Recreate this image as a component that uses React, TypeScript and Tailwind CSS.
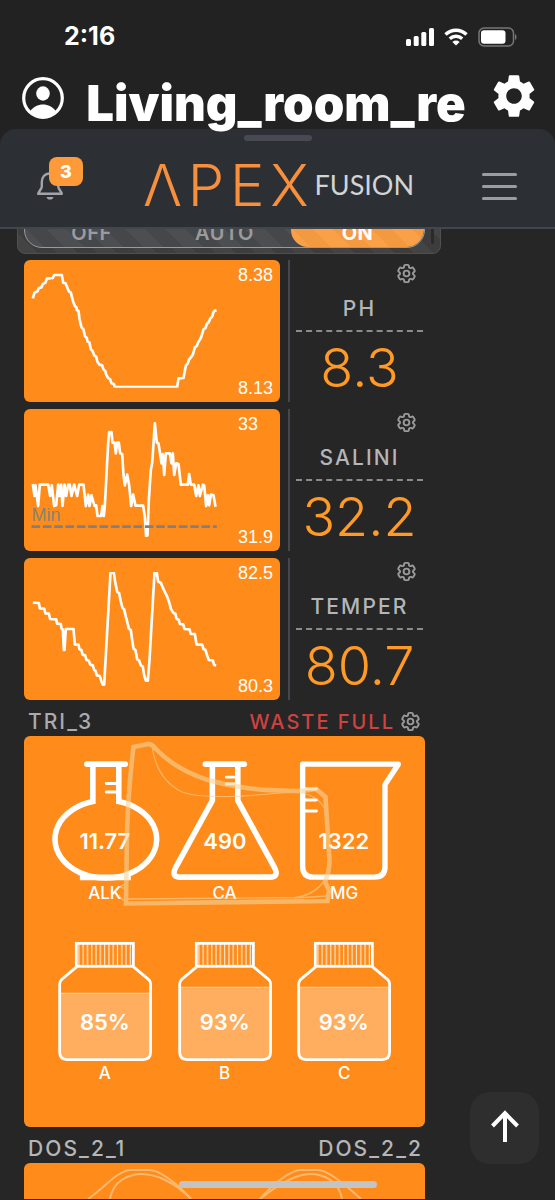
import { HiOutlineCog6Tooth } from "react-icons/hi2";
import { MdSettings } from "react-icons/md";

const probes = [
  {
    name: "PH",
    value: "8.3",
    high: "8.38",
    low: "8.13",
    viewBox: "27 28 639 426",
    points:
      "52,143 57,126 66,122 70,112 78,110 82,100 90,96 94,84 112,82 116,73 139,73 143,96 150,98 155,110 160,122 166,126 172,150 178,166 183,170 184,178 189,180 192,205 198,230 204,236 208,256 214,262 216,272 222,276 226,296 231,300 236,314 242,318 246,334 252,342 260,344 264,356 270,362 272,372 278,382 284,386 288,398 295,400 298,409 485,409 489,383 504,382 511,345 517,338 520,328 526,320 532,312 538,290 544,286 548,275 556,262 560,250 564,236 570,232 574,220 580,214 584,204 590,198 594,184 598,180 603,179",
  },
  {
    name: "SALINI",
    value: "32.2",
    high: "33",
    low: "31.9",
    min: 380,
    viewBox: "27 27 639 426",
    points:
      "52,252 57,288 60,256 68,318 73,254 98,254 104,288 109,256 116,318 122,316 128,254 132,288 137,254 141,318 147,254 152,288 158,254 163,254 168,288 176,254 185,288 191,254 204,254 211,318 218,284 222,318 228,286 237,318 242,316 246,348 257,348 261,318 265,348 268,318 278,130 281,96 288,96 291,128 297,128 301,160 305,128 310,128 314,160 320,162 324,225 328,256 335,224 341,256 347,318 353,284 360,317 383,317 388,350 392,410 396,406 400,300 406,210 410,190 418,70 424,128 429,130 434,162 438,190 442,162 446,225 451,160 463,160 468,190 472,160 476,225 482,190 489,192 496,254 517,254 521,222 526,254 536,254 542,288 549,256 553,288 562,254 566,256 572,318 577,286 581,316 586,284 594,286 600,320",
  },
  {
    name: "TEMPER",
    value: "80.7",
    high: "82.5",
    low: "80.3",
    viewBox: "27 24 639 426",
    points:
      "52,158 70,159 73,175 86,176 90,190 100,191 104,207 122,208 125,221 136,222 138,236 142,238 145,300 147,300 151,237 174,237 178,283 189,284 192,298 198,300 201,314 209,316 213,330 220,332 224,344 232,346 236,360 240,362 244,376 253,378 257,392 262,404 266,404 285,68 295,68 299,95 305,125 311,130 316,155 321,174 326,178 331,200 335,215 340,236 346,240 350,270 354,296 360,300 365,328 371,332 376,346 382,350 386,376 391,392 397,392 402,330 417,68 424,68 428,95 436,98 442,113 449,128 456,142 462,160 466,176 473,188 480,192 483,206 490,210 493,222 503,223 507,237 522,238 526,252 538,252 543,283 560,284 564,297 570,300 574,314 580,330 592,331 596,345 602,346",
  },
];

const bottles = [
  { label: "A", percent: 85 },
  { label: "B", percent: 93 },
  { label: "C", percent: 93 },
];

function StatusBar() {
  return (
    <div className="flex h-[74px] items-center justify-between pl-16 pr-[38px]">
      <span className="text-[25px] font-bold text-white">2:16</span>
      <div className="flex items-center gap-2.5">
        <svg className="h-[18px] w-7" viewBox="0 0 28 18" fill="#fff">
          <rect x="0" y="11" width="5" height="7" rx="1.5" />
          <rect x="7.7" y="8" width="5" height="10" rx="1.5" />
          <rect x="15.3" y="4" width="5" height="14" rx="1.5" />
          <rect x="23" y="0" width="5" height="18" rx="1.5" />
        </svg>
        <svg className="h-[18px] w-6" viewBox="0 0 24 18" fill="none" stroke="#fff" strokeWidth="3.4">
          <path d="M1.5 6.5a15 15 0 0 1 21 0" />
          <path d="M5.8 10.8a9 9 0 0 1 12.4 0" />
          <path d="M12 17.6 8.4 14a5.2 5.2 0 0 1 7.2 0Z" fill="#fff" stroke="none" />
        </svg>
        <svg className="h-5 w-[39px]" viewBox="0 0 39 20">
          <rect x="1" y="1" width="34.5" height="18" rx="5" fill="none" stroke="#777" strokeWidth="1.5" />
          <rect x="3" y="3.2" width="24.5" height="13.6" rx="3" fill="#fff" />
          <path d="M37 7v6c2-.8 2-5.2 0-6Z" fill="#777" />
        </svg>
      </div>
    </div>
  );
}

function TitleBar() {
  return (
    <div className="relative z-10 flex h-[55px] items-center justify-between pl-[22px] pr-[15px]">
      <button type="button" aria-label="Account" className="mb-2">
        <svg className="size-[42px]" viewBox="0 0 42 42" fill="#fff">
          <circle cx="21" cy="21" r="19.3" fill="none" stroke="#fff" strokeWidth="3.2" />
          <ellipse cx="21" cy="16.5" rx="6.8" ry="7.2" />
          <path d="M8 34.5C11 30 16 27.6 21 27.6S31 30 34 34.5A19.5 19.5 0 0 1 8 34.5Z" />
        </svg>
      </button>
      <h1 className="mt-1 whitespace-nowrap text-[49px] leading-[55px] font-black text-white">
        Living_room_re
      </h1>
      <button type="button" aria-label="Settings" className="mb-3 text-white">
        <MdSettings className="size-[52px]" />
      </button>
    </div>
  );
}

function AppHeader() {
  return (
    <header className="h-[100px] rounded-t-2xl border-b-2 border-[#42474d] bg-[#2c3034] pt-1.5">
      <div className="mx-auto h-1.5 w-[68px] rounded-full bg-[#474a53]" />
      <div className="flex items-center justify-between pt-4 pr-[38px] pl-9">
        <button type="button" aria-label="Notifications" className="relative h-14 w-[47px]">
          <svg className="mt-0.5 h-7 w-7" viewBox="0 0 28 28" fill="none" stroke="#a3a4a7" strokeWidth="2.4" strokeLinejoin="round">
            <path d="M14 1.5C8.5 1.5 5.8 5.5 5.8 10v4.5C5.8 17 2.5 19.5 2.2 21.8H25.8C25.5 19.5 22.2 17 22.2 14.5V10C22.2 5.5 19.5 1.5 14 1.5Z" />
            <path d="M10.5 25h7c-.5 3.4-6.5 3.4-7 0Z" fill="#a3a4a7" stroke="none" />
          </svg>
          <span className="absolute top-0 right-0 flex h-[29px] w-[34px] items-center justify-center rounded-lg bg-[#ff9a38] text-lg font-extrabold text-white">
            3
          </span>
        </button>
        <a href="#home" className="mr-2 flex items-center">
          <span className="text-[58px] leading-[56px] font-light tracking-widest text-[#f78f3c]">
            ΛPEX
          </span>
          <span className="font-['Lato'] text-[27px] leading-8 text-[#d3d4d6]">
            FUSION
          </span>
        </a>
        <button type="button" aria-label="Menu" className="mt-0.5 flex w-[35px] flex-col gap-[9px]">
          <span className="h-[3px] rounded-full bg-[#9b9ea1]" />
          <span className="h-[3px] rounded-full bg-[#9b9ea1]" />
          <span className="h-[3px] rounded-full bg-[#9b9ea1]" />
        </button>
      </div>
    </header>
  );
}

function OutletSwitch() {
  return (
    <div className="mr-[114px] ml-[17px] flex h-[25px] items-end overflow-hidden">
      <div className="flex h-14 w-full items-end rounded-lg border border-[#505050] bg-[repeating-linear-gradient(45deg,#444_0_14px,#3d3d3d_14px_28px)] px-1.5 pb-[5px]">
        <div className="grid h-9 flex-1 grid-cols-3 overflow-hidden rounded-[18px] border border-[#9a9a9a] bg-[repeating-linear-gradient(45deg,#4c4e52_0_14px,#45474b_14px_28px)] text-xl font-semibold tracking-wide text-[#9b9b9d]">
          <button type="button" className="pt-1.5">OFF</button>
          <button type="button" className="pt-1.5">AUTO</button>
          <button
            type="button"
            className="rounded-[18px] bg-[repeating-linear-gradient(45deg,#faa148_0_14px,#f3993f_14px_28px)] pt-1.5 font-bold text-white"
          >
            ON
          </button>
        </div>
        <div className="mb-1 ml-1.5 h-6 w-[3px] rounded-full bg-[#2a2a2a]" />
      </div>
    </div>
  );
}

function ProbeRow({ probe }: { probe: (typeof probes)[number] }) {
  const clip = `plot-${probe.name}`;
  return (
    <div className="flex h-[142px] gap-2">
      <div className="flex flex-1 overflow-hidden rounded-md bg-[#ff8c1a]">
        <svg className="h-full min-w-0 flex-1" viewBox={probe.viewBox}>
          <clipPath id={clip}>
            <rect x="40" y="66" width="580" height="345" />
          </clipPath>
          <polyline
            points={probe.points}
            fill="none"
            stroke="#fff"
            strokeWidth="8"
            strokeLinejoin="round"
            clipPath={`url(#${clip})`}
          />
          {probe.min && (
            <>
              <path d={`M48 ${probe.min}H604`} stroke="#808080" strokeWidth="8" strokeDasharray="26 8" />
              <text x="48" y={probe.min - 18} fontSize="54" fill="#8c8075" fontFamily="Liberation Sans, sans-serif">
                Min
              </text>
            </>
          )}
        </svg>
        <div className="flex w-[42px] flex-col justify-between pt-[5px] pb-1 font-['Liberation_Sans'] text-lg leading-5 text-white">
          <span>{probe.high}</span>
          <span>{probe.low}</span>
        </div>
      </div>
      <div className="flex w-[137px] flex-col border-l-2 border-[#44474b] pr-0.5 pl-1.5">
        <button type="button" aria-label={`Configure ${probe.name}`} className="mt-0.5 mr-[5px] self-end text-[#9a9a9a]">
          <HiOutlineCog6Tooth className="size-[23px]" strokeWidth={2} />
        </button>
        <h2 className="mt-2.5 pb-[7px] text-center text-[21px] leading-7 font-medium tracking-widest text-[#b4b6b9]">
          {probe.name}
        </h2>
        <div className="border-t-2 border-dashed border-[#8c8c8c]" />
        <p className="mt-2 text-center text-[54px] leading-[56px] font-light text-[#ff9a26]">
          {probe.value}
        </p>
      </div>
    </div>
  );
}

function Value({ children }: { children: string }) {
  return (
    <text x="60" y="89" textAnchor="middle" fontSize="22" fontWeight="600" fill="#fff">
      {children}
    </text>
  );
}

function Caption({ children }: { children: string }) {
  return <span className="text-[17px] leading-5 font-medium text-white">{children}</span>;
}

function Trident() {
  return (
    <section className="relative rounded-md bg-[#ff8c1a] px-[21px] pt-6 pb-11">
      <div className="grid grid-cols-3 gap-y-[38px]">
        <div className="flex flex-col items-center">
          <svg className="h-[123px] w-full" viewBox="0 0 120 123" fill="none" stroke="#fff" strokeWidth="5.6">
            <path d="M42 4H80.5" strokeLinecap="round" />
            <path d="M48 4V41.5A51 39 0 1 0 74 41.5V4" />
            <path d="M35 117.5H86" />
            <path d="M61.5 23.5H73M61.5 32H73" strokeWidth="3" strokeLinecap="round" />
            <g stroke="none"><Value>11.77</Value></g>
          </svg>
          <Caption>ALK</Caption>
        </div>
        <div className="flex flex-col items-center">
          <svg className="h-[123px] w-full" viewBox="0 0 120 123" fill="none" stroke="#fff" strokeWidth="5.6">
            <path d="M40.5 4H79.5" strokeLinecap="round" />
            <path d="M47.5 4V40.5L10.5 108Q6 117.3 15.5 117.3H105Q114.5 117.3 110 108L73 40.5V4" />
            <path d="M61.5 17H72M61.5 24H72" strokeWidth="3" strokeLinecap="round" />
            <g stroke="none"><Value>490</Value></g>
          </svg>
          <Caption>CA</Caption>
        </div>
        <div className="flex flex-col items-center">
          <svg className="h-[123px] w-full" viewBox="0 0 120 123" fill="none" stroke="#fff" strokeWidth="5.4" strokeLinejoin="round">
            <path d="M18.7 4H114.7L101.3 24.5V107Q101.3 117.3 91 117.3H29Q18.7 117.3 18.7 107Z" />
            <path d="M20 29H32.5M20 40H32.5M20 51H32.5" strokeWidth="3" strokeLinecap="round" />
            <g stroke="none"><Value>1322</Value></g>
          </svg>
          <Caption>MG</Caption>
        </div>
        {bottles.map((bottle) => {
          const level = 116 - bottle.percent * 0.75;
          return (
            <div key={bottle.label} className="flex flex-col items-center">
              <svg className="h-[122px] w-full" viewBox="0 0 120 122" fill="none" stroke="#fff" strokeWidth="2.8">
                <rect x="16" y={level} width="89" height={118 - level} fill="#ffad5e" stroke="none" />
                <path d={`M16 ${level}H105`} stroke="#ffd3a6" strokeWidth="1" />
                {Array.from({ length: 13 }, (_, i) => (
                  <path
                    key={i}
                    d={`M${34 + i * 4.3} 3V25`}
                    stroke="#ffe0c0"
                    strokeWidth={i % 3 === 0 ? 1.2 : 1.8}
                    opacity={i % 3 === 0 ? 1 : 0.7}
                  />
                ))}
                <rect x="31.4" y="2.2" width="57.2" height="23" />
                <path d="M32 25.5L16.5 38.5Q14.7 40.5 14.7 43V111Q14.7 118.8 22 118.8H98.5Q105.9 118.8 105.9 111V43Q105.9 40.5 104 38.5L88.5 25.5" />
                <g stroke="none"><Value>{`${bottle.percent}%`}</Value></g>
              </svg>
              <Caption>{bottle.label}</Caption>
            </div>
          );
        })}
      </div>

      {/* Reagent container outline */}
      <svg
        className="pointer-events-none absolute inset-0 h-full w-full"
        viewBox="24 736 401 391"
        fill="none"
        stroke="#f5d49a"
        opacity="0.6"
      >
        <path
          d="M133.5 747L148 744Q152 744 155 748C170 764 186 773 208 780C236 788 262 791 302 791L316 789L325.5 797L329 853Q331 868 325 882L329 890L327.5 901L126 903.5L127 833C128 800 131 767 133.5 747Z"
          strokeWidth="4.6"
        />
        <path d="M152 746C155 768 164 783 182 792C205 800 250 796 292 792C310 792 322 800 326 812" strokeWidth="1.2" />
        <path d="M128 899L295 897.5C308 896 318 890 325 880M295 898L328 896M124 885C116 887 120 888 127 888M119 895C121 900 124 901 128 901" strokeWidth="1.4" />
      </svg>
    </section>
  );
}

export default function App() {
  return (
    <div className="relative min-h-screen overflow-hidden bg-[#262626] font-['Inter',sans-serif]">
      <div className="bg-[#222]">
        <StatusBar />
        <TitleBar />
        <AppHeader />
      </div>

      <OutletSwitch />

      <main className="pt-1.5 pr-[130px] pl-6">
        <div className="flex flex-col gap-[7px]">
          {probes.map((probe) => (
            <ProbeRow key={probe.name} probe={probe} />
          ))}
        </div>

        <div className="flex h-9 items-center gap-1 pt-[7px] pr-[3px] pl-1 text-xl leading-7 font-medium tracking-widest">
          <h2 className="flex-1 text-[21px] text-[#a9abae]">TRI_3</h2>
          <span className="text-[#cf4240]">WASTE FULL</span>
          <button type="button" aria-label="Configure TRI_3" className="text-[#9a9a9a]">
            <HiOutlineCog6Tooth className="size-[23px]" strokeWidth={2} />
          </button>
        </div>
        <Trident />

        <div className="flex h-9 items-center justify-between pt-[7px] pr-0.5 pl-1 text-[21px] leading-7 font-medium tracking-widest text-[#b4b6b9]">
          <h2>DOS_2_1</h2>
          <h2>DOS_2_2</h2>
        </div>
        <div className="overflow-hidden rounded-t-md bg-[#ff8c1a]">
          <svg className="h-9 w-full" viewBox="24 1162 401 36" preserveAspectRatio="none" fill="none" stroke="#ffb870" strokeWidth="2">
            <path d="M88 1198C104 1187 118 1169 131 1169H149C160 1169 179 1184 191 1198" />
            <path d="M110 1198C113 1180 128 1173 142 1173S176 1182 191 1198" />
            <path d="M260 1198C272 1184 290 1169 301 1169H318C329 1169 349 1187 361 1198" />
            <path d="M260 1198C280 1182 296 1173 310 1173S339 1180 342 1198" />
          </svg>
        </div>
      </main>

      <button
        type="button"
        aria-label="Scroll to top"
        className="absolute right-4 bottom-9 flex h-[72px] w-[69px] items-center justify-center rounded-[20px] bg-[#2e2e2e] pb-1"
      >
        <svg className="h-8 w-[30px]" viewBox="0 0 30 32" fill="none" stroke="#fff" strokeWidth="4">
          <path d="M15 32V4M2.5 16L15 3.2L27.5 16" />
        </svg>
      </button>
      <div className="absolute bottom-3 left-1/2 h-[7px] w-[198px] -translate-x-1/2 rounded-full bg-[#c4c4c4]" />
    </div>
  );
}
